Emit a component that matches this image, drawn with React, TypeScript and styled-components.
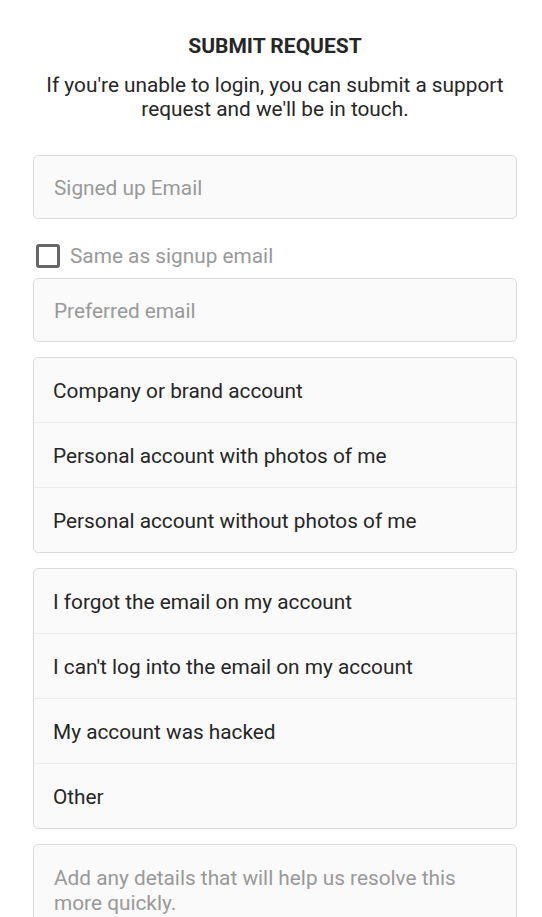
import React from "react";
import styled, { createGlobalStyle } from "styled-components";

const Global = createGlobalStyle`
  html, body { margin: 0; padding: 0; background: #ffffff; }
  body { font-family: Roboto, "Noto Sans", "Liberation Sans", sans-serif; }
  * { box-sizing: border-box; }
`;

const Page = styled.div`
  padding: 34px 25px 0 33px;
  display: flex;
  flex-direction: column;
`;

const Title = styled.h1`
  margin: 0;
  font-size: 21px;
  line-height: 24px;
  font-weight: 700;
  color: #262626;
  text-align: center;
`;

const Subtitle = styled.p`
  margin: 15px 0 0;
  font-size: 20.8px;
  line-height: 24px;
  color: #262626;
  text-align: center;
`;

const Form = styled.div`
  margin-top: 34px;
  display: flex;
  flex-direction: column;
`;

const Field = styled.div`
  height: 64px;
  border: 1px solid #dbdbdb;
  border-radius: 5px;
  background: #fafafa;
  display: flex;
  align-items: center;
  padding: 2px 20px 0;
  font-size: 20.8px;
  color: #999999;
`;

const CheckRow = styled.label`
  margin: 25px 0 10px;
  height: 24px;
  display: flex;
  align-items: center;
  gap: 10px;
  padding-left: 3px;
  font-size: 20.8px;
  color: #999999;
`;

const Box = styled.span`
  width: 24px;
  height: 24px;
  border: 3px solid #666666;
  border-radius: 3px;
  background: #ffffff;
`;

const Group = styled.div`
  margin-top: 15px;
  border: 1px solid #dbdbdb;
  border-radius: 5px;
  background: #fafafa;
  display: flex;
  flex-direction: column;
  overflow: hidden;
`;

const Option = styled.div`
  height: 64px;
  display: flex;
  align-items: center;
  padding: 2px 19px 0;
  font-size: 20.8px;
  color: #262626;
  & + & {
    border-top: 1px solid #ececec;
    height: 65px;
  }
`;

const TextArea = styled.div`
  margin-top: 15px;
  min-height: 110px;
  border: 1px solid #dbdbdb;
  border-radius: 5px;
  background: #fafafa;
  padding: 21px 20px;
  font-size: 20.8px;
  line-height: 25px;
  color: #999999;
`;

const accountTypes = [
  "Company or brand account",
  "Personal account with photos of me",
  "Personal account without photos of me",
];

const reasons = [
  "I forgot the email on my account",
  "I can't log into the email on my account",
  "My account was hacked",
  "Other",
];

export default function App() {
  return (
    <>
      <Global />
      <Page>
        <Title>SUBMIT REQUEST</Title>
        <Subtitle>
          If you're unable to login, you can submit a support
          <br />
          request and we'll be in touch.
        </Subtitle>
        <Form>
          <Field>Signed up Email</Field>
          <CheckRow>
            <Box />
            Same as signup email
          </CheckRow>
          <Field>Preferred email</Field>
          <Group>
            {accountTypes.map((t) => (
              <Option key={t}>{t}</Option>
            ))}
          </Group>
          <Group>
            {reasons.map((t) => (
              <Option key={t}>{t}</Option>
            ))}
          </Group>
          <TextArea>
            Add any details that will help us resolve this
            <br />
            more quickly.
          </TextArea>
        </Form>
      </Page>
    </>
  );
}
